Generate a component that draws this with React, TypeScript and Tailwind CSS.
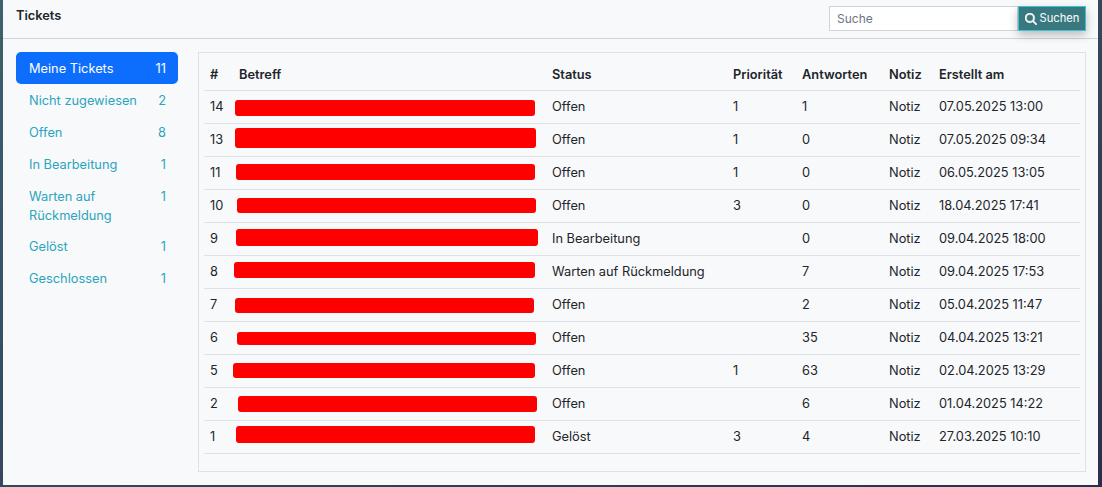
import React from "react";

const nav: [string, string, boolean?][] = [
  ["Meine Tickets", "11", true],
  ["Nicht zugewiesen", "2"],
  ["Offen", "8"],
  ["In Bearbeitung", "1"],
  ["Warten auf Rückmeldung", "1"],
  ["Gelöst", "1"],
  ["Geschlossen", "1"],
];

// id, status, priority, answers, created, redaction box [x0, x1, y0, y1] as page pixels
const rows: [string, string, string, string, string, number, number, number, number][] = [
  ["14", "Offen", "1", "1", "07.05.2025 13:00", 235, 535, 100, 116],
  ["13", "Offen", "1", "0", "07.05.2025 09:34", 235, 536, 128, 148],
  ["11", "Offen", "1", "0", "06.05.2025 13:05", 236, 535, 164, 180],
  ["10", "Offen", "3", "0", "18.04.2025 17:41", 237, 536, 198, 213],
  ["9", "In Bearbeitung", "", "0", "09.04.2025 18:00", 236, 538, 229, 246],
  ["8", "Warten auf Rückmeldung", "", "7", "09.04.2025 17:53", 234, 535, 262, 278],
  ["7", "Offen", "", "2", "05.04.2025 11:47", 235, 534, 298, 313],
  ["6", "Offen", "", "35", "04.04.2025 13:21", 237, 536, 332, 345],
  ["5", "Offen", "1", "63", "02.04.2025 13:29", 233, 535, 363, 378],
  ["2", "Offen", "", "6", "01.04.2025 14:22", 238, 537, 396, 412],
  ["1", "Gelöst", "3", "4", "27.03.2025 10:10", 236, 535, 426, 443],
];

function SearchIcon() {
  return (
    <svg viewBox="0 0 512 512" width="12" height="12" fill="currentColor" stroke="currentColor" strokeWidth="16" aria-hidden="true">
      <path d="M416 208c0 45.900-14.900 88.300-40 122.700L502.600 457.400c12.500 12.500 12.500 32.800 0 45.300s-32.800 12.500-45.300 0L330.700 376c-34.400 25.200-76.800 40-122.700 40C93.100 416 0 322.900 0 208S93.100 0 208 0S416 93.100 416 208zM208 352a144 144 0 1 0 0-288 144 144 0 1 0 0 288z" />
    </svg>
  );
}

export default function App() {
  return (
    <div className="h-[487px] w-[1102px] overflow-hidden bg-linear-to-br from-[#3d626e] to-[#2a2f4d] pl-[3px] pr-[4px] pb-[2px] font-['Inter',sans-serif] text-[12.8px] leading-[19.2px] text-[#212529]">
      <div className="flex h-full flex-col bg-[#f8f9fb]">
        <header className="flex h-[39px] items-start justify-between border-b border-[#ced4da] pl-[13px] pr-[12px]">
          <h1 className="mt-[6px] font-semibold">Tickets</h1>
          <form className="mt-[6px] flex h-[25px]">
            <input
              placeholder="Suche"
              className="h-full w-[189px] border border-[#ced4da] bg-white px-[7px] pb-[1px] text-[12px] outline-none placeholder:text-[#6c757d]"
            />
            <button className="flex h-full w-[68px] items-center justify-center gap-[3px] border border-[#3fc1d1] bg-[#37797f] text-[11.2px] text-white shadow-[0_4px_10px_rgba(0,0,0,0.25)]">
              <SearchIcon />
              Suchen
            </button>
          </form>
        </header>
        <div className="flex items-start gap-[20px] pl-[13px] pr-[12px] pt-[13px]">
          <nav className="flex w-[162px] shrink-0 flex-col leading-[19px]">
            {nav.map(([label, count, active]) => (
              <a
                key={label}
                className={
                  "flex justify-between gap-[6px] rounded-[5px] pl-[13px] pr-[12px] pt-[6.5px] pb-[6.5px] nth-[5]:pb-[6px] " +
                  (active ? "bg-[#0d6efd] text-white" : "text-[#2ba5bd]")
                }
              >
                <span className="w-[110px]">{label}</span>
                <span>{count}</span>
              </a>
            ))}
          </nav>
          <section className="h-[420px] w-[888px] border border-[#dee2e6] px-[5px] pt-[4px]">
            <table className="w-[876px] table-fixed border-separate border-spacing-0 text-left [&_td]:border-b [&_td]:border-[#dee2e6] [&_td]:pb-[1px] [&_th]:border-b [&_th]:border-[#dee2e6] [&_th]:pt-[2px] [&_th]:font-semibold">
              <colgroup>
                <col className="w-[29px]" />
                <col className="w-[319px]" />
                <col className="w-[181px]" />
                <col className="w-[69px]" />
                <col className="w-[87px]" />
                <col className="w-[50px]" />
                <col />
              </colgroup>
              <thead>
                <tr className="h-[34px]">
                  <th className="pl-[6px]">#</th>
                  <th className="pl-[6px]">Betreff</th>
                  <th>Status</th>
                  <th>Priorität</th>
                  <th>Antworten</th>
                  <th>Notiz</th>
                  <th>Erstellt am</th>
                </tr>
              </thead>
              <tbody>
                {rows.map(([id, status, prio, answers, created, x0, x1, y0, y1], i) => (
                  <tr key={id} className="h-[33px]">
                    <td className="pl-[6px]">{id}</td>
                    <td className="relative">
                      <span
                        className="absolute rounded-[3px] bg-[#ff0000]"
                        style={{
                          left: x0 - 233,
                          width: x1 - x0,
                          top: y0 - (91 + i * 33),
                          height: y1 - y0,
                        }}
                      />
                    </td>
                    <td>{status}</td>
                    <td>{prio}</td>
                    <td>{answers}</td>
                    <td>Notiz</td>
                    <td>{created}</td>
                  </tr>
                ))}
              </tbody>
            </table>
          </section>
        </div>
      </div>
    </div>
  );
}
